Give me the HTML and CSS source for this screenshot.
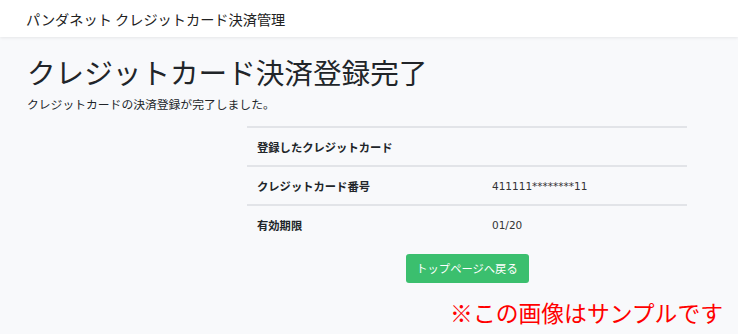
FILE: index.html
```html
<!DOCTYPE html>
<html lang="ja">
<head>
  <meta charset="UTF-8">
  <meta name="viewport" content="width=device-width, initial-scale=1.0">
  <title>クレジットカード決済登録完了</title>
  <link rel="stylesheet" href="styles.css">
</head>
<body>
  <nav class="navbar">
    <a class="navbar-brand" href="#">パンダネット クレジットカード決済管理</a>
  </nav>

  <main class="content">
    <h1 class="page-title">クレジットカード決済登録完了</h1>
    <p class="lead">クレジットカードの決済登録が完了しました。</p>

    <div class="card-result">
      <table class="result-table">
        <tr>
          <th colspan="2">登録したクレジットカード</th>
        </tr>
        <tr>
          <th>クレジットカード番号</th>
          <td>411111********11</td>
        </tr>
        <tr>
          <th>有効期限</th>
          <td>01/20</td>
        </tr>
      </table>
      <div class="actions">
        <a class="btn-success" href="#">トップページへ戻る</a>
      </div>
    </div>

    <div class="sample-note">※この画像はサンプルです</div>
  </main>
</body>
</html>
```

FILE: styles.css
```css
body {
  margin: 0;
  background: #f8f9fb;
  color: #212529;
  font-family: "Noto Sans CJK JP", "Noto Sans", sans-serif;
}

.navbar {
  height: 37px;
  display: flex;
  align-items: center;
  padding: 0 26px;
  background: #fff;
  box-shadow: 0 1px 3px rgba(0, 0, 0, 0.08);
}

.navbar-brand {
  color: #222;
  font-size: 14.2px;
  text-decoration: none;
}

.content {
  padding: 16px 15px 0 27px;
}

.page-title {
  margin: 0;
  font-size: 28.6px;
  font-weight: 400;
  line-height: 1.3;
}

.lead {
  margin: 5px 0 14px;
  font-size: 11.8px;
}

.card-result {
  width: 440px;
  margin-left: 220px;
}

.result-table {
  width: 100%;
  border-collapse: collapse;
  font-size: 11.3px;
}

.result-table th,
.result-table td {
  height: 36px;
  padding: 1px 10px 0;
  border-top: 2px solid #e2e4e8;
  text-align: left;
  vertical-align: middle;
}

.result-table th {
  width: 215px;
  font-weight: 700;
}

.result-table td {
  font-family: "DejaVu Sans", sans-serif;
  font-size: 10.5px;
  color: #333;
}

.actions {
  display: flex;
  justify-content: center;
  margin-top: 11px;
}

.btn-success {
  display: inline-block;
  width: 123px;
  height: 29px;
  line-height: 29px;
  text-align: center;
  background: #3bbf6e;
  color: #fff;
  font-size: 11.3px;
  text-decoration: none;
  border-radius: 3px;
  box-sizing: border-box;
}

.sample-note {
  display: flex;
  justify-content: flex-end;
  margin-top: 15px;
  color: #ff0000;
  font-size: 22.8px;
  line-height: 30px;
}
```
